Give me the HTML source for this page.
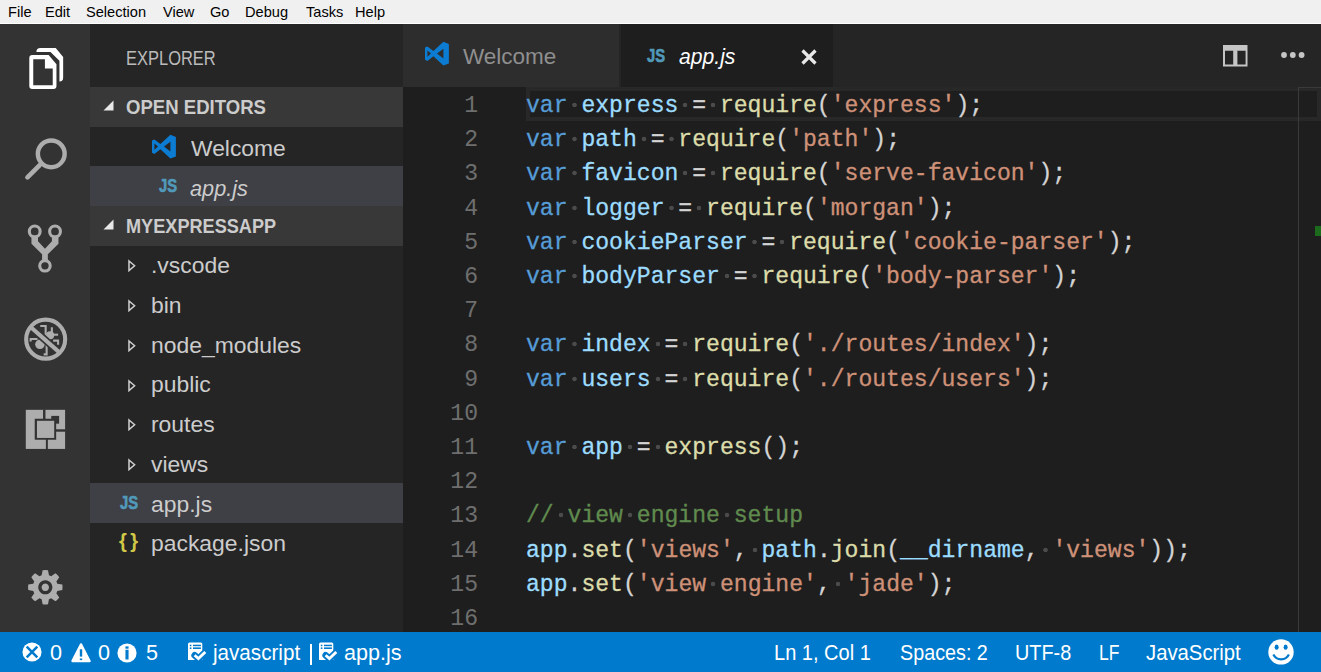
<!DOCTYPE html>
<html><head><meta charset="utf-8">
<style>
*{margin:0;padding:0;box-sizing:border-box}
html,body{width:1321px;height:672px;overflow:hidden;background:#1e1e1e;font-family:"Liberation Sans",sans-serif}
.abs{position:absolute}
#menu{left:0;top:0;width:1321px;height:23px;background:#f0f0f0;border-bottom:1px solid #fff;box-sizing:content-box}
#menu span{position:absolute;top:4px;font-size:14.6px;color:#000;line-height:17px}
#act{left:0;top:24px;width:90px;height:608px;background:#333333}
#side{left:90px;top:24px;width:313px;height:608px;background:#252526}
#tabs{left:403px;top:24px;width:918px;height:63px;background:#252526}
#editor{left:403px;top:87px;width:918px;height:545px;background:#1e1e1e;overflow:hidden}
#status{left:0;top:632px;width:1321px;height:40px;background:#007acc;color:#fff}
.side-t{position:absolute;color:#bbbbbb;white-space:nowrap}
.row{position:absolute;left:0;width:313px;height:39.6px}
.code{position:absolute;left:123px;margin-top:2px;-webkit-text-stroke:0.3px currentColor;font-family:"Liberation Mono",monospace;font-size:23.08px;white-space:pre;color:#d4d4d4;line-height:34.2px}
.ln{position:absolute;left:0;margin-top:2px;width:75px;text-align:right;font-family:"Liberation Mono",monospace;font-size:23.08px;color:#6e6e6e;line-height:34.2px}
.k{color:#569cd6}.v{color:#9cdcfe}.f{color:#dcdcaa}.s{color:#ce9178}.c{color:#608b4e}
.w{display:inline-block;width:13.848px;height:34.2px;vertical-align:top;background:radial-gradient(circle at 50% 16px,#4b4b4b 0,#4b4b4b 1.9px,rgba(75,75,75,0) 2.6px)}
.st{position:absolute;top:8.6px;font-size:22.5px;line-height:24px;color:#fff;white-space:nowrap}
.js{position:absolute;font-family:"Liberation Sans",sans-serif;font-weight:bold;font-size:18px;color:#519aba;line-height:18px;transform:scaleX(0.82);transform-origin:0 0;-webkit-text-stroke:0.6px #519aba}
.brace{position:absolute;font-family:"Liberation Sans",sans-serif;font-weight:bold;font-size:20px;color:#d2c847;line-height:24px;white-space:pre;letter-spacing:-1px}
</style></head><body>
<div id="menu" class="abs">
<span style="left:8px">File</span>
<span style="left:45px">Edit</span>
<span style="left:86px">Selection</span>
<span style="left:163px">View</span>
<span style="left:210px">Go</span>
<span style="left:245px">Debug</span>
<span style="left:306px">Tasks</span>
<span style="left:355px">Help</span>
</div>
<div id="act" class="abs">
<svg class="abs" style="left:20px;top:21px" width="50" height="50" viewBox="0 0 672 672"><path fill="#fff" d="M220 95Q220 40 275 40H480L580 160V440Q580 490 530 490V210L410 95Z"/><path fill="#fff" fill-rule="evenodd" d="M125 175Q125 135 165 135H385L490 260V550Q490 590 450 590H165Q125 590 125 550ZM178 190V540H440V315H335V190Z"/></svg>
<svg class="abs" style="left:20px;top:111px" width="50" height="50" viewBox="0 0 672 672"><circle cx="420" cy="253" r="180" fill="none" stroke="#adadad" stroke-width="60"/><path d="M100 570L265 405" stroke="#adadad" stroke-width="62" stroke-linecap="round"/></svg>
<svg class="abs" style="left:20px;top:196px" width="50" height="55" viewBox="0 0 611 672"><circle cx="180" cy="140" r="66" fill="none" stroke="#adadad" stroke-width="38"/><circle cx="428" cy="140" r="66" fill="none" stroke="#adadad" stroke-width="38"/><circle cx="305" cy="560" r="64" fill="none" stroke="#adadad" stroke-width="38"/><path fill="#adadad" d="M140 200V290L270 420V500H340V420L470 290V200H390V260L305 350L220 260V200Z"/></svg>
<svg class="abs" style="left:20px;top:290px" width="50" height="50" viewBox="0 0 672 672">
<g fill="#adadad"><circle cx="405" cy="287" r="55"/><circle cx="268" cy="408" r="64"/></g>
<g fill="none" stroke="#adadad" stroke-width="28"><path d="M272 162H345V290"/><path d="M428 178V250"/><path d="M440 278H512"/><path d="M445 358H512V412"/><path d="M130 337H235M143 330V368"/><path d="M358 400V543H318"/></g>
<path d="M150 182L525 512" stroke="#333333" stroke-width="100"/>
<circle cx="345" cy="338" r="262" fill="none" stroke="#adadad" stroke-width="55"/>
<path d="M150 182L525 512" stroke="#adadad" stroke-width="55"/>
</svg>
<svg class="abs" style="left:20px;top:376px" width="50" height="60" viewBox="0 0 560 672"><rect x="65" y="110" width="440" height="438" fill="#adadad"/><g fill="#333333"><rect x="258" y="105" width="27" height="110"/><rect x="290" y="435" width="22" height="118"/><rect x="400" y="328" width="110" height="27"/><rect x="165" y="210" width="240" height="235"/><rect x="350" y="178" width="88" height="87"/></g><rect x="190" y="233" width="193" height="192" fill="#adadad"/></svg>
<svg class="abs" style="left:20px;top:538px" width="50" height="50" viewBox="0 0 672 672"><path fill="#adadad" fill-rule="evenodd" d="M290.9 179.3L303.7 110.9 A232 232 0 0 1 376.3 110.9 L389.1 179.3A168 168 0 0 1 418.9 191.7L476.4 152.3 A232 232 0 0 1 527.7 203.6 L488.3 261.1A168 168 0 0 1 500.7 290.9L569.1 303.7 A232 232 0 0 1 569.1 376.3 L500.7 389.1A168 168 0 0 1 488.3 418.9L527.7 476.4 A232 232 0 0 1 476.4 527.7 L418.9 488.3A168 168 0 0 1 389.1 500.7L376.3 569.1 A232 232 0 0 1 303.7 569.1 L290.9 500.7A168 168 0 0 1 261.1 488.3L203.6 527.7 A232 232 0 0 1 152.3 476.4 L191.7 418.9A168 168 0 0 1 179.3 389.1L110.9 376.3 A232 232 0 0 1 110.9 303.7 L179.3 290.9A168 168 0 0 1 191.7 261.1L152.3 203.6 A232 232 0 0 1 203.6 152.3 L261.1 191.7A168 168 0 0 1 290.9 179.3ZM340 245A95 95 0 1 0 340.1 245ZM340 290A50 50 0 1 1 339.9 290Z"/></svg>
</div>
<div id="side" class="abs">
<div class="side-t" style="left:36px;top:23px;font-size:19.5px;color:#bbbbbb;transform:scaleX(0.845);transform-origin:0 0">EXPLORER</div>
<div class="row" style="top:63px;background:#383838"></div>
<svg class="abs" style="left:13px;top:76px" width="11" height="11" viewBox="0 0 11 11"><path d="M10.5 0.5V10.5H0.5Z" fill="#e8e8e8"/></svg>
<div class="side-t" style="left:36px;top:72px;font-size:19.5px;font-weight:bold;color:#cccccc;transform:scaleX(0.952);transform-origin:0 0">OPEN EDITORS</div>
<svg class="abs" style="left:58px;top:106px" width="32" height="32" viewBox="0 0 32 32"><path fill-rule="evenodd" d="M22.4 4.8L27.9 7V26.4L22.4 28.6L12.4 19.3L6.4 24L4 22.8V10.6L6.4 9.4L12.4 14ZM6.4 13.5L10 16.6L6.4 19.7ZM22.4 11.8L16 16.6L22.4 21.4Z" fill="#0c7bd2"/></svg>
<div class="side-t" style="left:100.5px;top:112px;font-size:22.5px;color:#cccccc;transform:scaleX(1.015);transform-origin:0 0">Welcome</div>
<div class="row" style="top:142px;background:#3f3f46"></div>
<div class="js" style="left:69px;top:152.5px">JS</div>
<div class="side-t" style="left:100px;top:152px;font-size:22.5px;font-style:italic;color:#cccccc;transform:scaleX(0.965);transform-origin:0 0">app.js</div>
<div class="row" style="top:182px;background:#383838"></div>
<svg class="abs" style="left:13px;top:195px" width="11" height="11" viewBox="0 0 11 11"><path d="M10.5 0.5V10.5H0.5Z" fill="#e8e8e8"/></svg>
<div class="side-t" style="left:36px;top:191px;font-size:19.5px;font-weight:bold;color:#cccccc;transform:scaleX(0.93);transform-origin:0 0">MYEXPRESSAPP</div>
<svg class="abs" style="left:37.5px;top:235.3px" width="9" height="13" viewBox="0 0 9 13"><path d="M1 2L6.6 6.8L1 11.6Z" fill="none" stroke="#d0d0d0" stroke-width="1.5"/></svg>
<div class="side-t" style="left:61px;top:228.2px;font-size:22.9px;color:#cccccc">.vscode</div>
<svg class="abs" style="left:37.5px;top:275.0px" width="9" height="13" viewBox="0 0 9 13"><path d="M1 2L6.6 6.8L1 11.6Z" fill="none" stroke="#d0d0d0" stroke-width="1.5"/></svg>
<div class="side-t" style="left:61px;top:267.9px;font-size:22.9px;color:#cccccc">bin</div>
<svg class="abs" style="left:37.5px;top:314.8px" width="9" height="13" viewBox="0 0 9 13"><path d="M1 2L6.6 6.8L1 11.6Z" fill="none" stroke="#d0d0d0" stroke-width="1.5"/></svg>
<div class="side-t" style="left:61px;top:307.7px;font-size:22.9px;color:#cccccc">node_modules</div>
<svg class="abs" style="left:37.5px;top:354.5px" width="9" height="13" viewBox="0 0 9 13"><path d="M1 2L6.6 6.8L1 11.6Z" fill="none" stroke="#d0d0d0" stroke-width="1.5"/></svg>
<div class="side-t" style="left:61px;top:347.4px;font-size:22.9px;color:#cccccc">public</div>
<svg class="abs" style="left:37.5px;top:394.2px" width="9" height="13" viewBox="0 0 9 13"><path d="M1 2L6.6 6.8L1 11.6Z" fill="none" stroke="#d0d0d0" stroke-width="1.5"/></svg>
<div class="side-t" style="left:61px;top:387.1px;font-size:22.9px;color:#cccccc">routes</div>
<svg class="abs" style="left:37.5px;top:433.9px" width="9" height="13" viewBox="0 0 9 13"><path d="M1 2L6.6 6.8L1 11.6Z" fill="none" stroke="#d0d0d0" stroke-width="1.5"/></svg>
<div class="side-t" style="left:61px;top:426.8px;font-size:22.9px;color:#cccccc">views</div>
<div class="row" style="top:459.2px;height:39.7px;background:#3f3f46"></div>
<div class="js" style="left:29.5px;top:470.0px">JS</div>
<div class="side-t" style="left:61px;top:466.6px;font-size:22.9px;color:#cccccc">app.js</div>
<div class="brace" style="left:29px;top:504.9px">{ }</div>
<div class="side-t" style="left:61px;top:506.3px;font-size:22.9px;color:#cccccc">package.json</div>
</div>
<div id="tabs" class="abs">
<div class="abs" style="left:0;top:0;width:216px;height:63px;background:#2d2d2d"></div>
<svg class="abs" style="left:18.1px;top:12.7px" width="32" height="32" viewBox="0 0 32 32"><path fill-rule="evenodd" d="M22.4 4.8L27.9 7V26.4L22.4 28.6L12.4 19.3L6.4 24L4 22.8V10.6L6.4 9.4L12.4 14ZM6.4 13.5L10 16.6L6.4 19.7ZM22.4 11.8L16 16.6L22.4 21.4Z" fill="#0c7bd2"/></svg>
<div class="side-t" style="left:60px;top:20px;font-size:22.5px;color:#8f8f8f">Welcome</div>
<div class="abs" style="left:218px;top:0;width:212px;height:63px;background:#1e1e1e"></div>
<div class="js" style="left:244px;top:23px">JS</div>
<div class="side-t" style="left:276px;top:20px;font-size:22.5px;font-style:italic;color:#ffffff;transform:scaleX(0.94);transform-origin:0 0">app.js</div>
<svg class="abs" style="left:398px;top:25px" width="16" height="16" viewBox="0 0 16 16"><path d="M1.5 1.5L14.5 14.5M14.5 1.5L1.5 14.5" stroke="#e8e8e8" stroke-width="3.2"/></svg>
<svg class="abs" style="left:819.7px;top:21.3px" width="25" height="22" viewBox="0 0 25 22"><path fill="#c5c5c5" fill-rule="evenodd" d="M0 0H24.5V21.5H0ZM2 5.7V19.5H10.2V5.7ZM14.4 5.7V19.5H22.6V5.7Z"/></svg>
<svg class="abs" style="left:876px;top:27px" width="30" height="8" viewBox="0 0 30 8"><circle cx="5" cy="4" r="2.9" fill="#c5c5c5"/><circle cx="13.8" cy="4" r="2.9" fill="#c5c5c5"/><circle cx="22.6" cy="4" r="2.9" fill="#c5c5c5"/></svg>
</div>
<div id="editor" class="abs">
<div class="abs" style="left:123px;top:0;width:795px;height:34px;border:4px solid #282828"></div>
<div class="ln" style="top:0.0px">1</div><div class="code" style="top:0.0px"><span class="k">var</span><span class="w"></span><span class="v">express</span><span class="w"></span>=<span class="w"></span><span class="f">require</span>(<span class="s">'express'</span>);</div>
<div class="ln" style="top:34.2px">2</div><div class="code" style="top:34.2px"><span class="k">var</span><span class="w"></span><span class="v">path</span><span class="w"></span>=<span class="w"></span><span class="f">require</span>(<span class="s">'path'</span>);</div>
<div class="ln" style="top:68.4px">3</div><div class="code" style="top:68.4px"><span class="k">var</span><span class="w"></span><span class="v">favicon</span><span class="w"></span>=<span class="w"></span><span class="f">require</span>(<span class="s">'serve-favicon'</span>);</div>
<div class="ln" style="top:102.6px">4</div><div class="code" style="top:102.6px"><span class="k">var</span><span class="w"></span><span class="v">logger</span><span class="w"></span>=<span class="w"></span><span class="f">require</span>(<span class="s">'morgan'</span>);</div>
<div class="ln" style="top:136.8px">5</div><div class="code" style="top:136.8px"><span class="k">var</span><span class="w"></span><span class="v">cookieParser</span><span class="w"></span>=<span class="w"></span><span class="f">require</span>(<span class="s">'cookie-parser'</span>);</div>
<div class="ln" style="top:171.0px">6</div><div class="code" style="top:171.0px"><span class="k">var</span><span class="w"></span><span class="v">bodyParser</span><span class="w"></span>=<span class="w"></span><span class="f">require</span>(<span class="s">'body-parser'</span>);</div>
<div class="ln" style="top:205.2px">7</div><div class="code" style="top:205.2px"></div>
<div class="ln" style="top:239.4px">8</div><div class="code" style="top:239.4px"><span class="k">var</span><span class="w"></span><span class="v">index</span><span class="w"></span>=<span class="w"></span><span class="f">require</span>(<span class="s">'./routes/index'</span>);</div>
<div class="ln" style="top:273.6px">9</div><div class="code" style="top:273.6px"><span class="k">var</span><span class="w"></span><span class="v">users</span><span class="w"></span>=<span class="w"></span><span class="f">require</span>(<span class="s">'./routes/users'</span>);</div>
<div class="ln" style="top:307.8px">10</div><div class="code" style="top:307.8px"></div>
<div class="ln" style="top:342.0px">11</div><div class="code" style="top:342.0px"><span class="k">var</span><span class="w"></span><span class="v">app</span><span class="w"></span>=<span class="w"></span><span class="f">express</span>();</div>
<div class="ln" style="top:376.2px">12</div><div class="code" style="top:376.2px"></div>
<div class="ln" style="top:410.4px">13</div><div class="code" style="top:410.4px"><span class="c">//</span><span class="w"></span><span class="c">view</span><span class="w"></span><span class="c">engine</span><span class="w"></span><span class="c">setup</span></div>
<div class="ln" style="top:444.6px">14</div><div class="code" style="top:444.6px"><span class="v">app</span>.<span class="f">set</span>(<span class="s">'views'</span>,<span class="w"></span><span class="v">path</span>.<span class="f">join</span>(<span class="v">__dirname</span>,<span class="w"></span><span class="s">'views'</span>));</div>
<div class="ln" style="top:478.8px">15</div><div class="code" style="top:478.8px"><span class="v">app</span>.<span class="f">set</span>(<span class="s">'view</span><span class="w"></span><span class="s">engine'</span>,<span class="w"></span><span class="s">'jade'</span>);</div>
<div class="ln" style="top:513.0px">16</div><div class="code" style="top:513.0px"></div>
<div class="abs" style="left:895px;top:0;width:1px;height:545px;background:#3a3a3a"></div>
<div class="abs" style="left:895px;top:0;width:23px;height:1px;background:#3a3a3a"></div>
<div class="abs" style="left:912px;top:139px;width:6px;height:10px;background:#1c6b1c"></div>
</div>
<div id="status" class="abs">
<svg class="abs" style="left:22.4px;top:10.4px" width="20" height="20" viewBox="0 0 20 20"><circle cx="10" cy="10" r="9.55" fill="#fff"/><path d="M4.7 4.7L15.3 15.3M15.3 4.7L4.7 15.3" stroke="#007acc" stroke-width="2.5"/></svg>
<div class="st" style="left:50px;transform:scaleX(0.96);transform-origin:0 0">0</div>
<svg class="abs" style="left:70.6px;top:10.6px" width="20" height="20" viewBox="0 0 20 20"><path d="M10 1.3L18.6 18.1H1.4Z" fill="#fff" stroke="#fff" stroke-width="2.2" stroke-linejoin="round"/><rect x="8.8" y="6.3" width="2.4" height="7.3" fill="#007acc"/><rect x="8.8" y="15.5" width="2.4" height="1.6" fill="#007acc"/></svg>
<div class="st" style="left:98px;transform:scaleX(0.96);transform-origin:0 0">0</div>
<svg class="abs" style="left:117.4px;top:10.5px" width="20" height="20" viewBox="0 0 20 20"><circle cx="10" cy="10" r="9.6" fill="#fff"/><rect x="8.45" y="6.75" width="3.1" height="9.75" fill="#007acc"/><rect x="8.45" y="3.4" width="3.1" height="2.3" fill="#007acc"/></svg>
<div class="st" style="left:145.5px;transform:scaleX(0.96);transform-origin:0 0">5</div>
<svg class="abs" style="left:184px;top:6px" width="26" height="26" viewBox="0 0 26 26"><path d="M4 6.1Q4 4.6 5.5 4.6H16.8Q18.3 4.6 18.3 6.1V21.9H4Z" fill="#fff"/><g fill="#007acc"><rect x="5.8" y="6.7" width="1.6" height="1.5"/><rect x="5.8" y="9.4" width="1.6" height="1.6"/><rect x="9" y="6.7" width="7.9" height="1.5"/><rect x="9" y="9.4" width="7.9" height="1.6"/></g><path d="M10.6 17.3L14.4 20.6L21.3 14" fill="none" stroke="#007acc" stroke-width="6.5" stroke-linecap="round"/><path d="M10.6 17.3L14.4 20.6L21.3 14" fill="none" stroke="#fff" stroke-width="2.8"/></svg>
<div class="st" style="left:212.5px;transform:scaleX(0.917);transform-origin:0 0">javascript</div>
<div class="abs" style="left:309.5px;top:11.5px;width:2.2px;height:21px;background:#fff"></div>
<svg class="abs" style="left:315.3px;top:6px" width="26" height="26" viewBox="0 0 26 26"><path d="M4 6.1Q4 4.6 5.5 4.6H16.8Q18.3 4.6 18.3 6.1V21.9H4Z" fill="#fff"/><g fill="#007acc"><rect x="5.8" y="6.7" width="1.6" height="1.5"/><rect x="5.8" y="9.4" width="1.6" height="1.6"/><rect x="9" y="6.7" width="7.9" height="1.5"/><rect x="9" y="9.4" width="7.9" height="1.6"/></g><path d="M10.6 17.3L14.4 20.6L21.3 14" fill="none" stroke="#007acc" stroke-width="6.5" stroke-linecap="round"/><path d="M10.6 17.3L14.4 20.6L21.3 14" fill="none" stroke="#fff" stroke-width="2.8"/></svg>
<div class="st" style="left:344px;transform:scaleX(0.96);transform-origin:0 0">app.js</div>
<div class="st" style="left:774px;transform:scaleX(0.890);transform-origin:0 0">Ln 1, Col 1</div>
<div class="st" style="left:900px;transform:scaleX(0.878);transform-origin:0 0">Spaces: 2</div>
<div class="st" style="left:1015px;transform:scaleX(0.883);transform-origin:0 0">UTF-8</div>
<div class="st" style="left:1099px;transform:scaleX(0.778);transform-origin:0 0">LF</div>
<div class="st" style="left:1145.5px;transform:scaleX(0.902);transform-origin:0 0">JavaScript</div>
<svg class="abs" style="left:1268.4px;top:6.9px" width="26" height="26" viewBox="0 0 26 26"><circle cx="13" cy="12.9" r="12.7" fill="#fff"/><ellipse cx="8.6" cy="8.2" rx="2" ry="2.6" fill="#007acc"/><ellipse cx="17.6" cy="8.2" rx="2" ry="2.6" fill="#007acc"/><path d="M5.35 15.45A8.66 8.66 0 0 0 20.9 15.45" fill="none" stroke="#007acc" stroke-width="2.2"/></svg>
</div>
</body></html>
